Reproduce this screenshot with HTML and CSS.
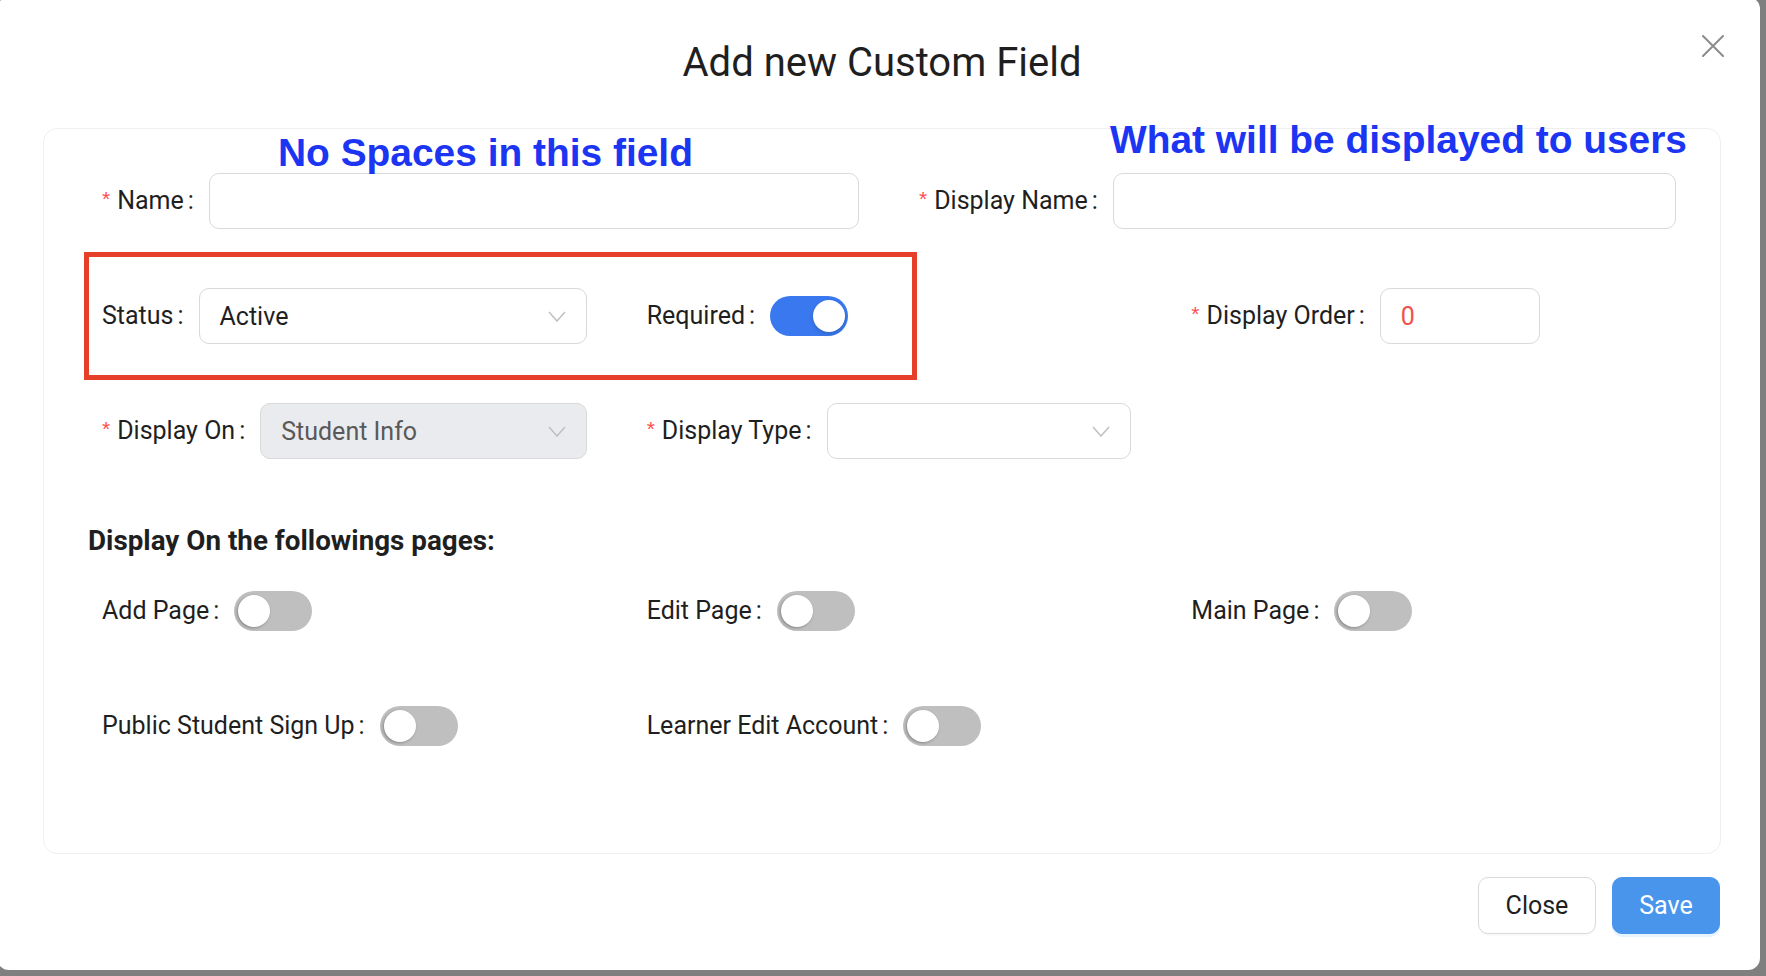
FILE: index.html
```html
<!DOCTYPE html>
<html lang="en">
<head>
<meta charset="utf-8">
<title>Add new Custom Field</title>
<link rel="stylesheet" href="styles.css">
</head>
<body>
<div class="modal">
  <div class="modal-inner">
    <div class="modal-header">
      <h1 class="modal-title">Add new Custom Field</h1>
      <button class="modal-close" aria-label="Close">
        <svg width="22" height="22" viewBox="0 0 22 22"><path d="M1 1 L21 21 M21 1 L1 21" stroke="#8c8c8c" stroke-width="2" fill="none" stroke-linecap="round"/></svg>
      </button>
    </div>

    <div class="card">
      <div class="row halves">
        <div class="item">
          <label class="label req">Name</label>
          <div class="input"></div>
        </div>
        <div class="item">
          <label class="label req">Display Name</label>
          <div class="input"></div>
        </div>
      </div>

      <div class="row thirds">
        <div class="item">
          <label class="label">Status</label>
          <div class="input select"><span>Active</span>
            <svg class="chev" width="18" height="11" viewBox="0 0 18 11"><path d="M1 1 L9 10 L17 1" stroke="#bfbfbf" stroke-width="1.5" fill="none"/></svg>
          </div>
        </div>
        <div class="item">
          <label class="label">Required</label>
          <span class="switch on"><span class="knob"></span></span>
        </div>
        <div class="item">
          <label class="label req">Display Order</label>
          <div class="input number"><span class="num">0</span></div>
        </div>
      </div>

      <div class="row thirds">
        <div class="item">
          <label class="label req">Display On</label>
          <div class="input select disabled"><span>Student Info</span>
            <svg class="chev" width="18" height="11" viewBox="0 0 18 11"><path d="M1 1 L9 10 L17 1" stroke="#bfbfbf" stroke-width="1.5" fill="none"/></svg>
          </div>
        </div>
        <div class="item">
          <label class="label req">Display Type</label>
          <div class="input select"><span></span>
            <svg class="chev" width="18" height="11" viewBox="0 0 18 11"><path d="M1 1 L9 10 L17 1" stroke="#bfbfbf" stroke-width="1.5" fill="none"/></svg>
          </div>
        </div>
        <div class="item"></div>
      </div>

      <h2 class="section-title">Display On the followings pages:</h2>

      <div class="row thirds">
        <div class="item">
          <label class="label">Add Page</label>
          <span class="switch"><span class="knob"></span></span>
        </div>
        <div class="item">
          <label class="label">Edit Page</label>
          <span class="switch"><span class="knob"></span></span>
        </div>
        <div class="item">
          <label class="label">Main Page</label>
          <span class="switch"><span class="knob"></span></span>
        </div>
      </div>

      <div class="row thirds">
        <div class="item">
          <label class="label">Public Student Sign Up</label>
          <span class="switch"><span class="knob"></span></span>
        </div>
        <div class="item">
          <label class="label">Learner Edit Account</label>
          <span class="switch"><span class="knob"></span></span>
        </div>
        <div class="item"></div>
      </div>
    </div>

    <div class="modal-footer">
      <button class="btn">Close</button>
      <button class="btn primary">Save</button>
    </div>

    <div class="note note-name">No Spaces in this field</div>
    <div class="note note-display">What will be displayed to users</div>
    <div class="highlight"></div>
  </div>
</div>
</body>
</html>
```

FILE: styles.css
```css
* { box-sizing: border-box; }

html, body {
  margin: 0;
  padding: 0;
  width: 1766px;
  height: 976px;
  overflow: hidden;
  background: #7f7f7f;
  font-family: Roboto, "Liberation Sans", sans-serif;
  color: #1f1f1f;
}

.modal {
  margin: -3px 0 0 -3px;
  width: 1763px;
  height: 973px;
  background: #ffffff;
  border-radius: 12px;
}

.modal-inner {
  position: relative;
  padding: 3px 0 0 3px;
  height: 100%;
}

.modal-header {
  padding-top: 39px;
  text-align: center;
}

.modal-title {
  margin: 0;
  font-size: 40px;
  line-height: 48px;
  font-weight: 400;
  color: #1f1f1f;
  padding-left: 4px;
}

.modal-close {
  position: absolute;
  left: 1705px;
  top: 38px;
  width: 22px;
  height: 22px;
  padding: 0;
  border: 0;
  background: transparent;
  display: flex;
}

.card {
  margin: 41px 0 0 43px;
  width: 1678px;
  height: 726px;
  border: 1px solid #efefef;
  border-radius: 14px;
  padding: 44px 0 0 44px;
}

.row {
  display: grid;
  margin-right: -2px;
  margin-bottom: 59px;
}

.halves { grid-template-columns: 1fr 1fr; }
.thirds { grid-template-columns: 1fr 1fr 1fr; }

.item {
  display: flex;
  align-items: center;
  height: 56px;
  padding: 0 46px 0 14px;
}

.label {
  font-size: 25px;
  line-height: 30px;
  white-space: nowrap;
  color: #1f1f1f;
  display: inline-flex;
  align-items: center;
}

.label::after {
  content: ":";
  margin: 0 15px 0 4px;
}

.label.req::before {
  content: "*";
  color: #ff4d4f;
  font-family: "Liberation Sans", sans-serif;
  font-size: 21px;
  margin-right: 7px;
  position: relative;
  top: -2px;
}

.input {
  flex: 1;
  height: 56px;
  border: 1px solid #d9d9d9;
  border-radius: 10px;
  background: #ffffff;
  display: flex;
  align-items: center;
  justify-content: space-between;
  padding: 0 20px;
  font-size: 25px;
  color: #1f1f1f;
}

.input.disabled {
  background: #eaebee;
  color: #595959;
}

.input.number {
  flex: 0 0 160px;
}

.num { color: #f0524b; }

.chev { flex: 0 0 auto; }

.switch {
  position: relative;
  display: inline-block;
  width: 78px;
  height: 40px;
  border-radius: 20px;
  background: #bfbfbf;
  flex: 0 0 auto;
}

.switch .knob {
  position: absolute;
  top: 4px;
  left: 4px;
  width: 32px;
  height: 32px;
  border-radius: 50%;
  background: #ffffff;
  box-shadow: -1px 1px 3px rgba(0, 0, 0, 0.3);
}

.switch.on { background: #3a78f0; }

.switch.on .knob {
  left: auto;
  right: 3px;
  box-shadow: 0 2px 4px rgba(0, 35, 11, 0.2);
}

.section-title {
  margin: 65px 0 25px 0;
  font-size: 27.8px;
  line-height: 34px;
  font-weight: 700;
  color: #1f1f1f;
}

.modal-footer {
  display: flex;
  justify-content: flex-end;
  gap: 16px;
  margin-top: 23px;
  padding-right: 40px;
}

.btn {
  height: 57px;
  padding: 0 26px;
  border: 1px solid #d9d9d9;
  border-radius: 10px;
  background: #ffffff;
  font-family: Roboto, "Liberation Sans", sans-serif;
  font-size: 25px;
  color: #1f1f1f;
  box-shadow: 0 2px 0 rgba(0, 0, 0, 0.02);
}

.btn:first-child { width: 118px; }

.btn.primary {
  width: 108px;
  background: #4a95ec;
  border-color: #4a95ec;
  color: #ffffff;
  box-shadow: 0 3px 0 rgba(5, 145, 255, 0.1);
}

.note {
  position: absolute;
  font-family: "Liberation Sans", Arial, sans-serif;
  font-weight: 700;
  font-size: 38.9px;
  line-height: 44px;
  color: #1b35f2;
  white-space: nowrap;
}

.note-name { left: 281px; top: 134px; }
.note-display { left: 1113px; top: 121px; }

.highlight {
  position: absolute;
  left: 87px;
  top: 255px;
  width: 833px;
  height: 128px;
  border: 5px solid #e6402a;
}
```
